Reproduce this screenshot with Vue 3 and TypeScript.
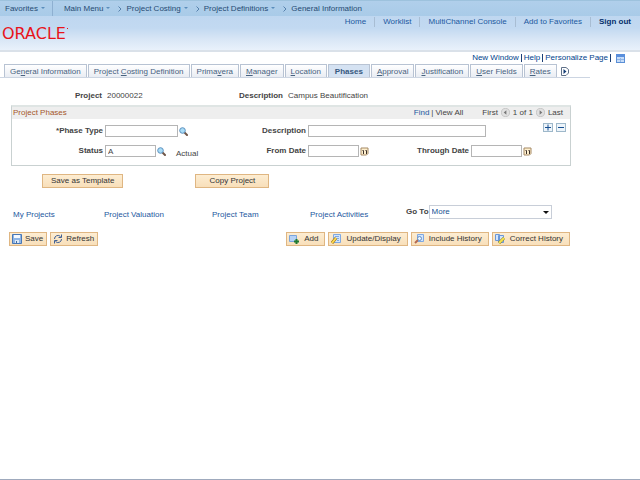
<script setup lang="ts">
import { ref } from 'vue'

interface Tab { before: string; key: string; after: string; active?: boolean }

const crumbs: string[] = ['Project Costing', 'Project Definitions']
const tabs: Tab[] = [
  { before: 'Ge', key: 'n', after: 'eral Information' },
  { before: 'Project ', key: 'C', after: 'osting Definition' },
  { before: 'Prima', key: 'v', after: 'era' },
  { before: '', key: 'M', after: 'anager' },
  { before: '', key: 'L', after: 'ocation' },
  { before: 'Phases', key: '', after: '', active: true },
  { before: '', key: 'A', after: 'pproval' },
  { before: '', key: 'J', after: 'ustification' },
  { before: '', key: 'U', after: 'ser Fields' },
  { before: '', key: 'R', after: 'ates' },
]
const phaseType = ref('')
const description = ref('')
const status = ref('A')
const fromDate = ref('')
const throughDate = ref('')
const goTo = ref('More')
</script>

<template>
  <div class="page">
    <header class="header">
      <nav class="crumbs" aria-label="Breadcrumb">
        <a href="#" class="fav">Favorites<i class="caret"></i></a>
        <a href="#" class="menu">Main Menu<i class="caret"></i></a>
        <template v-for="c in crumbs" :key="c">
          <svg class="chev" viewBox="0 0 4 6"><path d="M.5.5 3 3 .5 5.5" /></svg>
          <a href="#">{{ c }}<i class="caret"></i></a>
        </template>
        <svg class="chev" viewBox="0 0 4 6"><path d="M.5.5 3 3 .5 5.5" /></svg>
        <a href="#">General Information</a>
      </nav>
      <div class="brand-row">
        <div class="logo">ORACLE<i class="mark"></i></div>
        <nav class="top-links" aria-label="Global">
          <a href="#">Home</a>
          <a href="#">Worklist</a>
          <a href="#">MultiChannel Console</a>
          <a href="#">Add to Favorites</a>
          <a href="#" class="signout">Sign out</a>
        </nav>
      </div>
    </header>

    <nav class="page-links" aria-label="Page">
      <a href="#">New Window</a><i class="bar"></i>
      <a href="#">Help</a><i class="bar"></i>
      <a href="#">Personalize Page</a><i class="bar"></i>
      <a href="#" aria-label="Page layout">
        <svg class="grid-icon" viewBox="0 0 9 9">
          <rect x=".5" y=".5" width="8" height="8" fill="#c6dcf8" stroke="#5b8fd6" />
          <path d="M0 0h9v3H0z" fill="#5a8fdc" />
          <path d="M1 5.5h7M4.5 4v4" stroke="#91b5e5" />
        </svg>
      </a>
    </nav>

    <main class="content">
      <nav class="tabs" aria-label="Sections">
        <a v-for="t in tabs" :key="t.before + t.key" href="#" class="tab" :class="{ active: t.active }">{{ t.before }}<u v-if="t.key">{{ t.key }}</u>{{ t.after }}</a>
        <button class="next" aria-label="Next tabs">
          <svg viewBox="0 0 8 9"><path d="M.5.5h4.500l2.500 2v3.500l-2.500 2.500H.5z" fill="#fff" stroke="#5f7088" /><path d="M2.500 2v5l3-2.500z" fill="#173f77" /></svg>
        </button>
      </nav>

      <div class="summary">
        <b>Project</b><span>20000022</span>
        <b>Description</b><span>Campus Beautification</span>
      </div>

      <section class="panel">
        <div class="panel-head">
          <h2>Project Phases</h2>
          <div class="find"><a href="#">Find</a><span>|</span><span>View All</span></div>
          <div class="pager">
            <span>First</span>
            <button aria-label="Previous"><svg viewBox="0 0 10 10"><circle cx="5" cy="5" r="4.500" fill="#e1e1e1" stroke="#c2c2c2" /><path d="M6 2.500v5L3 5z" fill="#777" /></svg></button>
            <span>1 of 1</span>
            <button aria-label="Next"><svg viewBox="0 0 10 10"><circle cx="5" cy="5" r="4.500" fill="#e1e1e1" stroke="#c2c2c2" /><path d="M4 2.500v5L7 5z" fill="#777" /></svg></button>
            <span>Last</span>
          </div>
        </div>
        <div class="fields">
          <label for="phase">*Phase Type</label>
          <div class="cell">
            <input id="phase" v-model="phaseType" class="medium" />
            <button aria-label="Look up phase type"><svg class="small-icon" viewBox="0 0 9 9"><path d="m5 5 3 3" stroke="#6f5648" stroke-width="2" stroke-linecap="round" /><circle cx="3.500" cy="3.500" r="2.800" fill="#a9dcf7" stroke="#5c91bf" /></svg></button>
          </div>
          <label for="desc">Description</label>
          <div class="cell">
            <input id="desc" v-model="description" class="long" />
            <div class="row-actions">
              <button aria-label="Add row"><svg viewBox="0 0 8 7"><path d="M1 3.500h6M4 .5v6" stroke="#174f91" /></svg></button>
              <button aria-label="Delete row"><svg viewBox="0 0 8 7"><path d="M1 3.500h6" stroke="#174f91" /></svg></button>
            </div>
          </div>
          <label for="status">Status</label>
          <div class="cell">
            <input id="status" v-model="status" class="short" />
            <button aria-label="Look up status"><svg class="small-icon" viewBox="0 0 9 9"><path d="m5 5 3 3" stroke="#6f5648" stroke-width="2" stroke-linecap="round" /><circle cx="3.500" cy="3.500" r="2.800" fill="#a9dcf7" stroke="#5c91bf" /></svg></button>
            <span class="actual">Actual</span>
          </div>
          <label for="from">From Date</label>
          <div class="cell">
            <input id="from" v-model="fromDate" class="short" />
            <button aria-label="Choose from date"><svg class="small-icon" viewBox="0 0 9 9"><path d="M1 1h7v5.500L6.500 8H1z" fill="#fff0cf" stroke="#a58965" /><path d="M2.500 3.500h1V7M5.500 3.500h1V7" fill="none" stroke="#3c3028" /></svg></button>
            <label for="through" class="through">Through Date</label>
            <input id="through" v-model="throughDate" class="short" />
            <button aria-label="Choose through date"><svg class="small-icon" viewBox="0 0 9 9"><path d="M1 1h7v5.500L6.500 8H1z" fill="#fff0cf" stroke="#a58965" /><path d="M2.500 3.500h1V7M5.500 3.500h1V7" fill="none" stroke="#3c3028" /></svg></button>
          </div>
        </div>
      </section>

      <div class="actions">
        <button class="btn wide">Save as Template</button>
        <button class="btn wide">Copy Project</button>
      </div>

      <div class="related">
        <a href="#">My Projects</a>
        <a href="#">Project Valuation</a>
        <a href="#">Project Team</a>
        <a href="#">Project Activities</a>
        <div class="goto">
          <label for="goto">Go To</label>
          <div class="select-wrap">
            <select id="goto" v-model="goTo"><option>More</option></select>
            <i class="drop"></i>
          </div>
        </div>
      </div>

      <div class="toolbar">
        <div class="group compact">
          <button class="btn tool">
            <svg viewBox="0 0 10 10"><path d="M.5.5h9v9h-9z" fill="#8fb5e5" stroke="#4877b6" /><path d="M2 1h6v3H2z" fill="#f4f9ff" /><path d="M3 6h4v3H3z" fill="#dce9f8" /><path d="M4 7h1v2H4z" fill="#426d9f" /></svg>
            Save
          </button>
          <button class="btn tool">
            <svg viewBox="0 0 10 10" fill="none" stroke="#3f5f94"><path d="M1.500 5A3.500 3.500 0 0 1 7.500 2.500M8.500 5A3.500 3.500 0 0 1 2.500 7.500" /><path d="M8.500.5v3h-3M1.500 9.500v-3h3" /></svg>
            Refresh
          </button>
        </div>
        <div class="group">
          <button class="btn tool">
            <svg viewBox="0 0 10 10"><path d="M.5 1.500h7v6h-7z" fill="#b6d2f6" stroke="#7aa4dc" /><path d="M7.500 5v5M5 7.500h5" stroke="#207a32" stroke-width="2" /></svg>
            Add
          </button>
          <button class="btn tool">
            <svg viewBox="0 0 10 10"><path d="M2.500.5h7v8h-7z" fill="#d3e5fc" stroke="#7ea8e2" /><path d="M4 2.500h4M5 4.500h3M6 6.500h2" stroke="#7ea8e2" /><path d="m1 9 4-5" stroke="#9a741b" stroke-width="3" /><path d="m1 9 4-5" stroke="#ffd94b" stroke-width="2" /></svg>
            Update/Display
          </button>
          <button class="btn tool">
            <svg viewBox="0 0 10 10"><path d="M3.500.5h6v7h-6z" fill="#d3e5fc" stroke="#7ea8e2" /><path d="m1 9 3-3" stroke="#b46a50" stroke-width="2" /><circle cx="5.500" cy="4.500" r="2" fill="#e9f5ff" stroke="#648dc4" /></svg>
            Include History
          </button>
          <button class="btn tool">
            <svg viewBox="0 0 10 10"><path d="M.5.5h4v6h-4zM3.500 1.500h5v7h-5z" fill="#d3e5fc" stroke="#6997d8" /><path d="m4 9 5-5" stroke="#8c7a22" stroke-width="3" /><path d="m4 9 5-5" stroke="#f5e44e" stroke-width="2" /></svg>
            Correct History
          </button>
        </div>
      </div>
    </main>
    <footer class="footer"></footer>
  </div>
</template>

<style>
body { margin: 0; background: #fff; }
</style>

<style scoped>
* { box-sizing: border-box; }
.page { display: flex; flex-direction: column; min-height: 100vh; font: 8px/10px "Liberation Sans", Arial, sans-serif; color: #444; }
a { color: #1c58a0; text-decoration: none; white-space: nowrap; }
button { font: inherit; color: #333; border: 0; padding: 0; margin: 0; background: none; white-space: nowrap; }
svg { display: block; }
.header { height: 52px; border-bottom: 2px solid #dae1e9; background: linear-gradient(#bfd7f0 16px, #c2d9f1 28px, #dae7f6 40px, #e9f1fb 50px); }
.crumbs { display: flex; align-items: center; height: 16px; border-top: 1px solid #9dc2dd; background: linear-gradient(#b0cfeb, #a9cbe8); }
.crumbs a { color: #264b73; }
.crumbs .fav { padding: 2px 7px 2px 5px; border-right: 1px solid #8eb0d1; line-height: 11px; }
.crumbs .menu { margin-left: 11px; }
.caret { display: inline-block; margin-left: 3px; vertical-align: 2px; border: 2px solid transparent; border-top-color: #5b8dbb; border-bottom: 0; }
.chev { width: 4px; height: 6px; margin: 0 4px 0 8px; fill: none; stroke: #5681ac; }
.brand-row { display: flex; justify-content: space-between; align-items: flex-start; }
.logo { display: flex; margin: 8px 0 0 2px; font: 16px/19px "DejaVu Sans", sans-serif; color: #e8131b; }
.mark { width: 1px; height: 1px; margin: 4px 0 0 1px; background: #e8131b; }
.top-links { display: flex; margin: 1px 9px 0 0; }
.top-links a { padding-right: 8px; margin-right: 8px; border-right: 1px solid #a8bdd3; }
.top-links .signout { padding: 0; margin: 0; border: 0; font-weight: bold; color: #042e6b; }
.page-links { display: flex; align-items: center; height: 12px; gap: 2px; justify-content: flex-end; padding-right: 15px; }
.page-links a { color: #003f8c; }
.bar { width: 1px; height: 8px; background: #1c3f75; }
.grid-icon { width: 9px; height: 9px; margin-left: 3px; }
.content { display: flex; flex-direction: column; padding-right: 50px; }
.tabs { display: flex; gap: 1px; padding-left: 4px; border-bottom: 1px solid #ccd5e2; }
.tab { padding: 2px 5px 1px 5px; height: 13px; border: 1px solid #b8c3d3; border-bottom: 0; background: linear-gradient(#fff, #e9edf3); color: #47627f; }
.tab.active { padding: 2px 6px 1px 6px; background: #d5e2f2; font-weight: bold; color: #36587f; }
.next { margin: 1px 0 0 3px; }
.next svg { width: 8px; height: 9px; }
.summary { display: grid; grid-template-columns: 102px 126px 45px auto; column-gap: 5px; padding-top: 13px; }
.summary b { text-align: right; white-space: nowrap; font-weight: bold; }
.summary b:nth-of-type(2) { justify-self: end; }
.panel { margin: 4px 19px 0 11px; border: 1px solid #c9d1d1; border-top: 2px solid #dfe5e4; }
.panel-head { display: flex; align-items: center; height: 12px; background: #eee; padding-right: 7px; }
h2 { margin: 0 auto 0 1px; font: inherit; color: #a5562a; }
.find { display: flex; gap: 2px; margin-right: 19px; }
.pager { display: flex; align-items: center; gap: 3px; }
.pager svg { width: 9px; height: 9px; margin-bottom: 2px; }
.fields { display: grid; grid-template-columns: 91px 108px 91px 1fr; column-gap: 2px; row-gap: 8px; padding: 6px 4px 8px 0; }
.fields label, .goto label { font-weight: bold; text-align: right; white-space: nowrap; line-height: 12px; }
.cell { display: flex; align-items: center; gap: 1px; height: 12px; }
input { height: 12px; padding: 0 2px; border: 1px solid #b5b5b5; font: inherit; color: #444; background: #fff; border-radius: 0; }
.medium { width: 73px; }
.short { width: 51px; }
.long { width: 178px; }
.small-icon { width: 9px; height: 9px; }
.actual { margin-left: 9px; padding-top: 5px; }
.through { width: 100px; padding-right: 1px; }
.row-actions { display: flex; gap: 3px; margin: -8px 0 0 auto; }
.row-actions button { border: 1px solid #9eb8ca; background: #edf4fa; }
.row-actions svg { width: 8px; height: 7px; }
.btn { border: 1px solid #dfb682; background: linear-gradient(#fdedd2, #f8dfba); }
.actions { display: flex; gap: 72px; padding: 8px 0 0 42px; }
.wide { height: 14px; padding: 0 8px; min-width: 74px; }
.related { display: grid; grid-template-columns: 91px 108px 98px 96px auto; padding: 17px 0 0 13px; align-items: start; }
.related a { padding-top: 5px; }
.goto { display: flex; align-items: center; }
.select-wrap { position: relative; }
select { appearance: none; display: block; width: 123px; height: 14px; padding: 0 2px; font: inherit; color: #165291; border: 1px solid #c8ced8; background: #fff; border-radius: 0; }
.drop { position: absolute; right: 3px; top: 6px; border: 3px solid transparent; border-top-color: #111; border-bottom: 0; pointer-events: none; }
.toolbar { display: flex; justify-content: space-between; padding: 12px 20px 0 9px; }
.group { display: flex; gap: 3px; }
.tool { display: flex; align-items: center; gap: 5px; height: 14px; padding: 0 6px 0 2px; }
.compact .tool { gap: 3px; padding: 0 3px 0 2px; }
.tool svg { width: 10px; height: 10px; }
.footer { margin-top: auto; border-bottom: 1px solid #9faabd; }
</style>
